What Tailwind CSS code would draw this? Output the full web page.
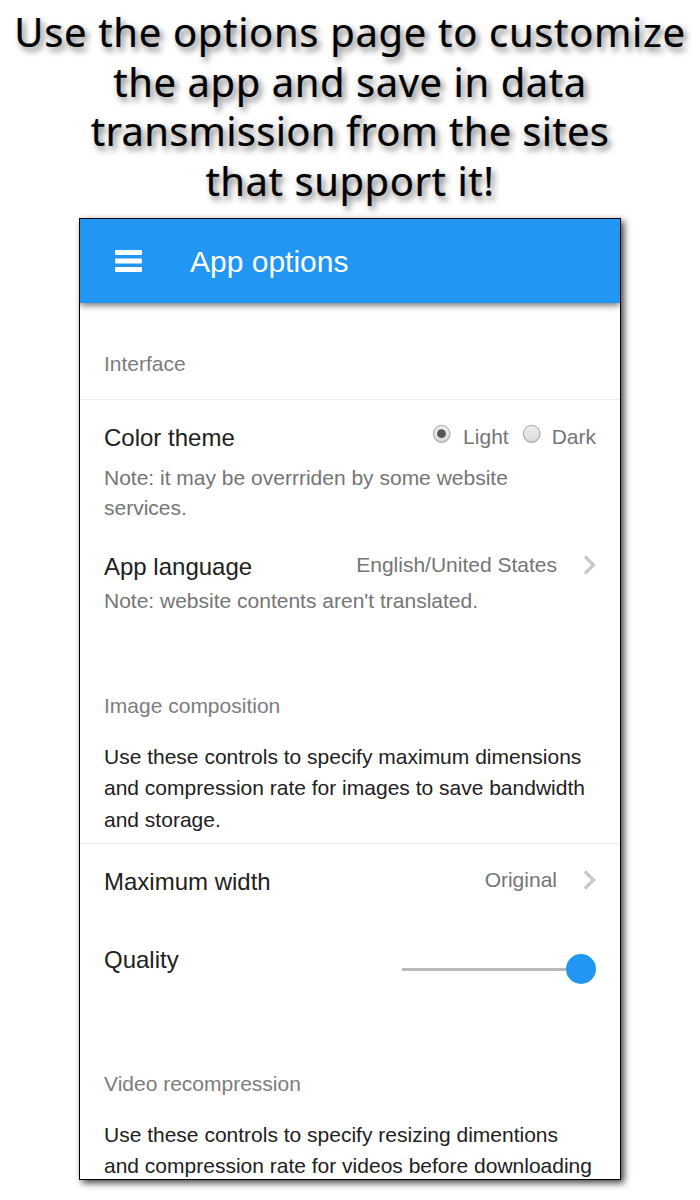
<!DOCTYPE html>
<html lang="en">
<head>
<meta charset="utf-8">
<title>App options</title>
<script src="https://cdn.jsdelivr.net/npm/@tailwindcss/browser@4"></script>
</head>
<body class="h-[1200px] w-[700px] overflow-hidden bg-white font-['Liberation_Sans',Arial,sans-serif]">
<h1 class="flex h-[218px] flex-col items-center pt-[7px] font-['Noto_Sans','Open_Sans',sans-serif] text-[40px] leading-[49.5px] whitespace-nowrap text-black [-webkit-text-stroke:0.2px_black] [text-shadow:3px_4px_6px_rgba(0,0,0,0.55)]">
  <span class="tracking-[0.65px]">Use the options page to customize</span>
  <span class="tracking-[0.54px]">the app and save in data</span>
  <span class="tracking-[0.26px]">transmission from the sites</span>
  <span class="tracking-[0.54px]">that support it!</span>
</h1>
<main class="ml-[79px] flex h-[962px] w-[542px] flex-col overflow-hidden border border-black bg-white text-[21px] whitespace-nowrap text-[#757575] shadow-[3px_3px_7px_rgba(0,0,0,0.75)]">
  <header class="relative flex h-[84px] shrink-0 items-center bg-[#2196f3] pl-[35px] text-[30px] text-white shadow-[0_2px_7px_rgba(0,0,0,0.6)]">
    <svg class="mr-[48px] h-[24px] w-[27px]" viewBox="0 0 27 24" fill="#fff"><rect y="1" width="27" height="5" rx="1"/><rect y="9.5" width="27" height="5" rx="1"/><rect y="18" width="27" height="5" rx="1"/></svg>
    <span>App options</span>
  </header>
  <section class="h-[342px] shrink-0">
    <h2 class="h-[97px] border-b border-[#eeeeee] px-6 pt-[45px] leading-8 text-[#7d7d7d]">Interface</h2>
    <div class="flex h-[62px] justify-between px-6 pt-[22px] leading-8">
      <span class="text-[24px] text-[#212121]">Color theme</span>
      <div class="flex">
        <svg class="mt-[2px] mr-[11px] h-[20px] w-[20px]" viewBox="0 0 20 20"><defs><linearGradient id="g" x2="0" y2="1"><stop stop-color="#eeeeee"/><stop offset="1" stop-color="#dadada"/></linearGradient></defs><circle cx="9.7" cy="10.8" r="8.7" fill="#ddd"/><circle cx="9.7" cy="9.7" r="8.3" fill="url(#g)" stroke="#a3a3a3"/><circle cx="9.5" cy="9.7" r="4.4" fill="#555"/></svg>
        <span class="-mt-px">Light</span>
        <svg class="mt-[2px] mr-[10px] ml-[13px] h-[20px] w-[20px]" viewBox="0 0 20 20"><circle cx="9.7" cy="10.8" r="8.7" fill="#ddd"/><circle cx="9.7" cy="9.7" r="8.3" fill="url(#g)" stroke="#a3a3a3"/></svg>
        <span class="-mt-px">Dark</span>
      </div>
    </div>
    <p class="h-[89px] px-6 pt-[1px] leading-[30px]">Note: it may be overrriden by some website<br>services.</p>
    <div class="flex h-[32px] justify-between px-6 leading-[32px]">
      <span class="text-[24px] text-[#212121]">App language</span>
      <div class="-mr-px flex"><span class="-mt-[2px]">English/United States</span><svg class="mt-[4px] ml-[26px] h-[20px] w-[14px]" viewBox="0 0 14 20" fill="none" stroke="#c7c7cc" stroke-width="3.2"><path d="M2 1.5 10.5 10 2 18.5"/></svg></div>
    </div>
    <p class="px-6 pt-[2px] leading-[32px]">Note: website contents aren't translated.</p>
  </section>
  <section class="h-[378px] shrink-0">
    <h2 class="h-[96px] px-6 pt-[45px] leading-8 text-[#7d7d7d]">Image composition</h2>
    <p class="h-[103px] border-b border-[#eeeeee] px-6 leading-[31.4px] text-[#212121]">Use these controls to specify maximum dimensions<br>and compression rate for images to save bandwidth<br>and storage.</p>
    <div class="flex h-[78px] justify-between px-6 pt-[22px] leading-8">
      <span class="text-[24px] text-[#212121]">Maximum width</span>
      <div class="-mr-px flex"><span class="-mt-[2px]">Original</span><svg class="mt-[4px] ml-[26px] h-[20px] w-[14px]" viewBox="0 0 14 20" fill="none" stroke="#c7c7cc" stroke-width="3.2"><path d="M2 1.5 10.5 10 2 18.5"/></svg></div>
    </div>
    <div class="flex h-[78px] justify-between px-6 pt-[22px] leading-8">
      <span class="text-[24px] text-[#212121]">Quality</span>
      <div class="mt-[10px] flex h-[30px] w-[194px] items-center"><div class="h-[3px] flex-1 bg-[#b9b9b9]"></div><div class="size-[30px] rounded-full bg-[#2196f3]"></div></div>
    </div>
  </section>
  <section>
    <h2 class="h-[96px] px-6 pt-[45px] leading-8 text-[#7d7d7d]">Video recompression</h2>
    <p class="px-6 leading-[31.4px] text-[#212121]">Use these controls to specify resizing dimentions<br>and compression rate for videos before downloading</p>
  </section>
</main>
</body>
</html>
